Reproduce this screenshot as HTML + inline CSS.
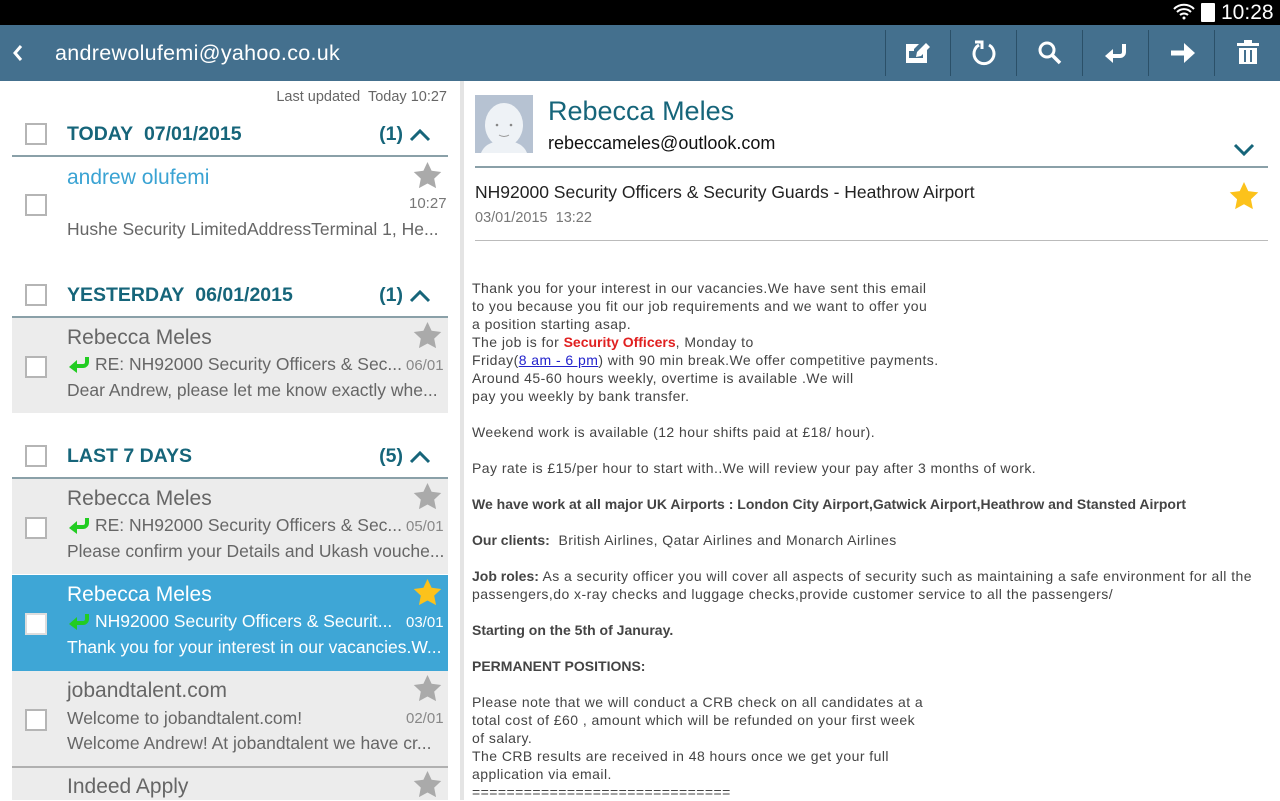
<!DOCTYPE html><html><head><meta charset="utf-8"><style>
*{margin:0;padding:0;box-sizing:border-box}
body{width:1280px;height:800px;overflow:hidden;background:#fff;font-family:"Liberation Sans",sans-serif;position:relative}
.a{position:absolute;white-space:nowrap}
.cb{position:absolute;left:25px;width:22px;height:22px;border:2px solid #b5b5b5;background:#fff}
.hd{position:absolute;left:67px;font-weight:bold;font-size:19.5px;color:#16657a}
.cnt{position:absolute;right:20px;font-weight:bold;font-size:19.5px;color:#16657a;display:flex;align-items:center;gap:6px}
.ln{position:absolute;left:12px;width:436px;height:2px;background:#8aa0a8}
.row{position:absolute;left:12px;width:436px;background:#ececec}
.body{position:absolute;left:472px;top:279px;font-size:14px;line-height:18px;color:#444;letter-spacing:.45px}
.body b{letter-spacing:0}
.tb{position:absolute;top:30px;width:1px;height:46px;background:#2b5068}
.ra{display:inline-block;vertical-align:-3px;margin-right:4px}
</style></head><body>
<div class="a" style="left:0;top:0;width:1280px;height:25px;background:#000"></div>
<svg class="a" style="left:1172px;top:3px" width="24" height="20" viewBox="0 0 24 20"><path d="M2 6a14 14 0 0 1 20 0M5 9a10 10 0 0 1 14 0M8 12a6 6 0 0 1 8 0" stroke="#fff" stroke-width="2" fill="none"/><circle cx="12" cy="15" r="1.5" fill="#fff"/></svg>
<div class="a" style="left:1201px;top:3px;width:14px;height:19px;background:#fff;border-radius:1px"></div>
<div class="a" style="left:1221px;top:0;color:#fff;font-size:21px;line-height:25px">10:28</div>
<div class="a" style="left:0;top:25px;width:1280px;height:56px;background:#44708e"></div>
<svg class="a" style="left:11px;top:44px" width="14" height="18"><path d="M10 2L4 9l6 7" stroke="#fff" stroke-width="3" fill="none"/></svg>
<div class="a" style="left:55px;top:41px;color:#fff;font-size:21.5px;letter-spacing:.3px">andrewolufemi@yahoo.co.uk</div>
<div class="tb" style="left:885px"></div><div class="tb" style="left:950px"></div><div class="tb" style="left:1016px"></div><div class="tb" style="left:1082px"></div><div class="tb" style="left:1148px"></div><div class="tb" style="left:1214px"></div>
<svg class="a" style="left:905px;top:41px" width="26" height="24"><path d="M1 3h13l-5 5v2h-5v7h14v-7l4-4v16H1z" fill="#fff"/><path d="M11 16l1-5 9-9 4 4-9 9z" fill="#fff"/></svg>
<svg class="a" style="left:971px;top:40px" width="26" height="26"><path d="M8 5A10 10 0 1 0 18 5" stroke="#fff" stroke-width="3" fill="none"/><path d="M4 2h7v7" stroke="#fff" stroke-width="3" fill="none"/></svg>
<svg class="a" style="left:1037px;top:40px" width="26" height="26"><circle cx="10" cy="10" r="7" stroke="#fff" stroke-width="3" fill="none"/><path d="M15 15l8 8" stroke="#fff" stroke-width="3.5"/></svg>
<svg class="a" style="left:1104px;top:42px" width="26" height="22"><path d="M20 2v8a4 4 0 0 1-4 4H8" stroke="#fff" stroke-width="4" fill="none"/><path d="M1 14l8-7v14z" fill="#fff"/></svg>
<svg class="a" style="left:1169px;top:41px" width="28" height="24"><path d="M2 12h16" stroke="#fff" stroke-width="5"/><path d="M15 2l11 10-11 10z" fill="#fff"/></svg>
<svg class="a" style="left:1236px;top:40px" width="24" height="26"><rect x="1" y="3" width="22" height="3" fill="#fff"/><rect x="8" y="0" width="8" height="4" fill="#fff"/><path d="M3 8h18v16H3z" fill="#fff"/><path d="M9 10v12M15 10v12" stroke="#44708e" stroke-width="2"/></svg>
<div class="a" style="left:460px;top:81px;width:4px;height:719px;background:#e4e4e4"></div>

<div class="a" style="right:833px;top:89px;font-size:14.5px;color:#666">Last updated&nbsp; Today 10:27</div>
<div class="cb" style="top:123px"></div><div class="hd" style="top:123px">TODAY&nbsp; 07/01/2015</div><div class="cnt" style="top:123px;left:0;width:431px;justify-content:flex-end">(1)<svg width="22" height="14"><path d="M2 12l9-9 9 9" stroke="#16657a" stroke-width="3" fill="none"/></svg></div>
<div class="ln" style="top:155px"></div>
<div class="cb" style="top:194px"></div>
<div class="a" style="left:67px;top:166px;font-size:21px;color:#3aa3d3">andrew olufemi</div>
<svg class="a" style="left:413px;top:162px" width="29" height="27" viewBox="0 0 24 23"><path d="M12 0l3.5 7.5 8.2 1-6 5.7 1.6 8.1L12 18.3l-7.3 4 1.6-8.1-6-5.7 8.2-1z" fill="#aaa"/></svg>
<div class="a" style="left:409px;top:195px;font-size:15px;color:#777">10:27</div>
<div class="a" style="left:67px;top:219px;font-size:17.5px;color:#666">Hushe Security LimitedAddressTerminal 1, He...</div>

<div class="cb" style="top:284px"></div><div class="hd" style="top:284px">YESTERDAY&nbsp; 06/01/2015</div><div class="cnt" style="top:284px;left:0;width:431px;justify-content:flex-end">(1)<svg width="22" height="14"><path d="M2 12l9-9 9 9" stroke="#16657a" stroke-width="3" fill="none"/></svg></div>
<div class="ln" style="top:316px"></div>

<div class="cb" style="top:445px"></div><div class="hd" style="top:445px">LAST 7 DAYS</div><div class="cnt" style="top:445px;left:0;width:431px;justify-content:flex-end">(5)<svg width="22" height="14"><path d="M2 12l9-9 9 9" stroke="#16657a" stroke-width="3" fill="none"/></svg></div>
<div class="ln" style="top:477px"></div>

<div class="row" style="top:318px;height:95px"></div>
<div class="row" style="top:479px;height:95px"></div>
<div class="row" style="top:575px;height:96px;background:#3ea6d6"></div>
<div class="row" style="top:671px;height:96px"></div>
<div class="a" style="left:12px;top:766px;width:436px;height:2px;background:#b0b0b0"></div>
<div class="row" style="top:768px;height:32px"></div>

<div class="cb" style="top:356px"></div>
<div class="cb" style="top:517px"></div>
<div class="cb" style="top:613px;border-color:#ddd"></div>
<div class="cb" style="top:709px"></div>

<div class="a" style="left:67px;top:326px;font-size:21px;color:#666">Rebecca Meles</div>
<div class="a" style="left:67px;top:354px;font-size:17.5px;color:#666"><svg class="ra" width="24" height="18"><path d="M20 2v5a4 4 0 0 1-4 4H9" stroke="#2c2" stroke-width="4" fill="none"/><path d="M2 12l8-7v13z" fill="#2c2"/></svg>RE: NH92000 Security Officers &amp; Sec...</div>
<div class="a" style="left:406px;top:357px;font-size:15px;color:#888">06/01</div>
<div class="a" style="left:67px;top:380px;font-size:17.5px;color:#666">Dear Andrew, please let me know exactly whe...</div>

<div class="a" style="left:67px;top:487px;font-size:21px;color:#666">Rebecca Meles</div>
<div class="a" style="left:67px;top:515px;font-size:17.5px;color:#666"><svg class="ra" width="24" height="18"><path d="M20 2v5a4 4 0 0 1-4 4H9" stroke="#2c2" stroke-width="4" fill="none"/><path d="M2 12l8-7v13z" fill="#2c2"/></svg>RE: NH92000 Security Officers &amp; Sec...</div>
<div class="a" style="left:406px;top:518px;font-size:15px;color:#888">05/01</div>
<div class="a" style="left:67px;top:541px;font-size:17.5px;color:#666">Please confirm your Details and Ukash vouche...</div>

<div class="a" style="left:67px;top:583px;font-size:21px;color:#fff">Rebecca Meles</div>
<div class="a" style="left:67px;top:611px;font-size:17.5px;color:#fff"><svg class="ra" width="24" height="18"><path d="M20 2v5a4 4 0 0 1-4 4H9" stroke="#2c2" stroke-width="4" fill="none"/><path d="M2 12l8-7v13z" fill="#2c2"/></svg>NH92000 Security Officers &amp; Securit...</div>
<div class="a" style="left:406px;top:614px;font-size:15px;color:#fff">03/01</div>
<div class="a" style="left:67px;top:637px;font-size:17.5px;color:#fff">Thank you for your interest in our vacancies.W...</div>

<div class="a" style="left:67px;top:679px;font-size:21px;color:#666">jobandtalent.com</div>
<div class="a" style="left:67px;top:708px;font-size:17.5px;color:#666">Welcome to jobandtalent.com!</div>
<div class="a" style="left:406px;top:710px;font-size:15px;color:#888">02/01</div>
<div class="a" style="left:67px;top:733px;font-size:17.5px;color:#666">Welcome Andrew! At jobandtalent we have cr...</div>

<div class="a" style="left:67px;top:775px;font-size:21px;color:#666">Indeed Apply</div>

<svg class="a" style="left:413px;top:322px" width="29" height="27" viewBox="0 0 24 23"><path d="M12 0l3.5 7.5 8.2 1-6 5.7 1.6 8.1L12 18.3l-7.3 4 1.6-8.1-6-5.7 8.2-1z" fill="#aaa"/></svg>
<svg class="a" style="left:413px;top:483px" width="29" height="27" viewBox="0 0 24 23"><path d="M12 0l3.5 7.5 8.2 1-6 5.7 1.6 8.1L12 18.3l-7.3 4 1.6-8.1-6-5.7 8.2-1z" fill="#aaa"/></svg>
<svg class="a" style="left:413px;top:579px" width="29" height="27" viewBox="0 0 24 23"><path d="M12 0l3.5 7.5 8.2 1-6 5.7 1.6 8.1L12 18.3l-7.3 4 1.6-8.1-6-5.7 8.2-1z" fill="#fcc21b"/></svg>
<svg class="a" style="left:413px;top:675px" width="29" height="27" viewBox="0 0 24 23"><path d="M12 0l3.5 7.5 8.2 1-6 5.7 1.6 8.1L12 18.3l-7.3 4 1.6-8.1-6-5.7 8.2-1z" fill="#aaa"/></svg>
<svg class="a" style="left:413px;top:771px" width="29" height="27" viewBox="0 0 24 23"><path d="M12 0l3.5 7.5 8.2 1-6 5.7 1.6 8.1L12 18.3l-7.3 4 1.6-8.1-6-5.7 8.2-1z" fill="#aaa"/></svg>

<svg class="a" style="left:475px;top:95px" width="58" height="58"><rect width="58" height="58" fill="#b6c2d2"/><ellipse cx="29" cy="30" rx="19" ry="22" fill="#eef2f6"/><path d="M6 58c4-10 14-12 23-12s19 2 23 12z" fill="#eef2f6"/><circle cx="22" cy="30" r="1.3" fill="#888"/><circle cx="36" cy="30" r="1.3" fill="#888"/><path d="M24 40q5 3 10 0" stroke="#999" fill="none"/></svg>
<div class="a" style="left:548px;top:96px;font-size:27px;color:#16657a">Rebecca Meles</div>
<div class="a" style="left:548px;top:133px;font-size:18px;color:#111">rebeccameles@outlook.com</div>
<svg class="a" style="left:1233px;top:143px" width="22" height="14"><path d="M2 2l9 9 9-9" stroke="#16657a" stroke-width="3" fill="none"/></svg>
<div class="a" style="left:475px;top:166px;width:793px;height:2px;background:#8aa0a8"></div>
<div class="a" style="left:475px;top:182px;font-size:17.5px;color:#222">NH92000 Security Officers &amp; Security Guards - Heathrow Airport</div>
<svg class="a" style="left:1229px;top:182px" width="30" height="28" viewBox="0 0 24 23"><path d="M12 0l3.5 7.5 8.2 1-6 5.7 1.6 8.1L12 18.3l-7.3 4 1.6-8.1-6-5.7 8.2-1z" fill="#fcc21b"/></svg>
<div class="a" style="left:475px;top:210px;font-size:14.5px;color:#777">03/01/2015&nbsp; 13:22</div>
<div class="a" style="left:475px;top:240px;width:793px;height:1px;background:#bbb"></div>

<div class="body">
Thank you for your interest in our vacancies.We have sent this email<br>
to you because you fit our job requirements and we want to offer you<br>
a position starting asap.<br>
The job is for <b style="color:#e02020">Security Officers</b>, Monday to<br>
Friday(<u style="color:#22c">8 am - 6 pm</u>) with 90 min break.We offer competitive payments.<br>
Around 45-60 hours weekly, overtime is available .We will<br>
pay you weekly by bank transfer.<br><br>
Weekend work is available (12 hour shifts paid at £18/ hour).<br><br>
Pay rate is £15/per hour to start with..We will review your pay after 3 months of work.<br><br>
<b>We have work at all major UK Airports : London City Airport,Gatwick Airport,Heathrow and Stansted Airport</b><br><br>
<b>Our clients:</b>&nbsp; British Airlines, Qatar Airlines and Monarch Airlines<br><br>
<b>Job roles:</b> As a security officer you will cover all aspects of security such as maintaining a safe environment for all the<br>
passengers,do x-ray checks and luggage checks,provide customer service to all the passengers/<br><br>
<b>Starting on the 5th of Januray.</b><br><br>
<b>PERMANENT POSITIONS:</b><br><br>
Please note that we will conduct a CRB check on all candidates at a<br>
total cost of £60 , amount which will be refunded on your first week<br>
of salary.<br>
The CRB results are received in 48 hours once we get your full<br>
application via email.<br>
==============================
</div>
</body></html>
